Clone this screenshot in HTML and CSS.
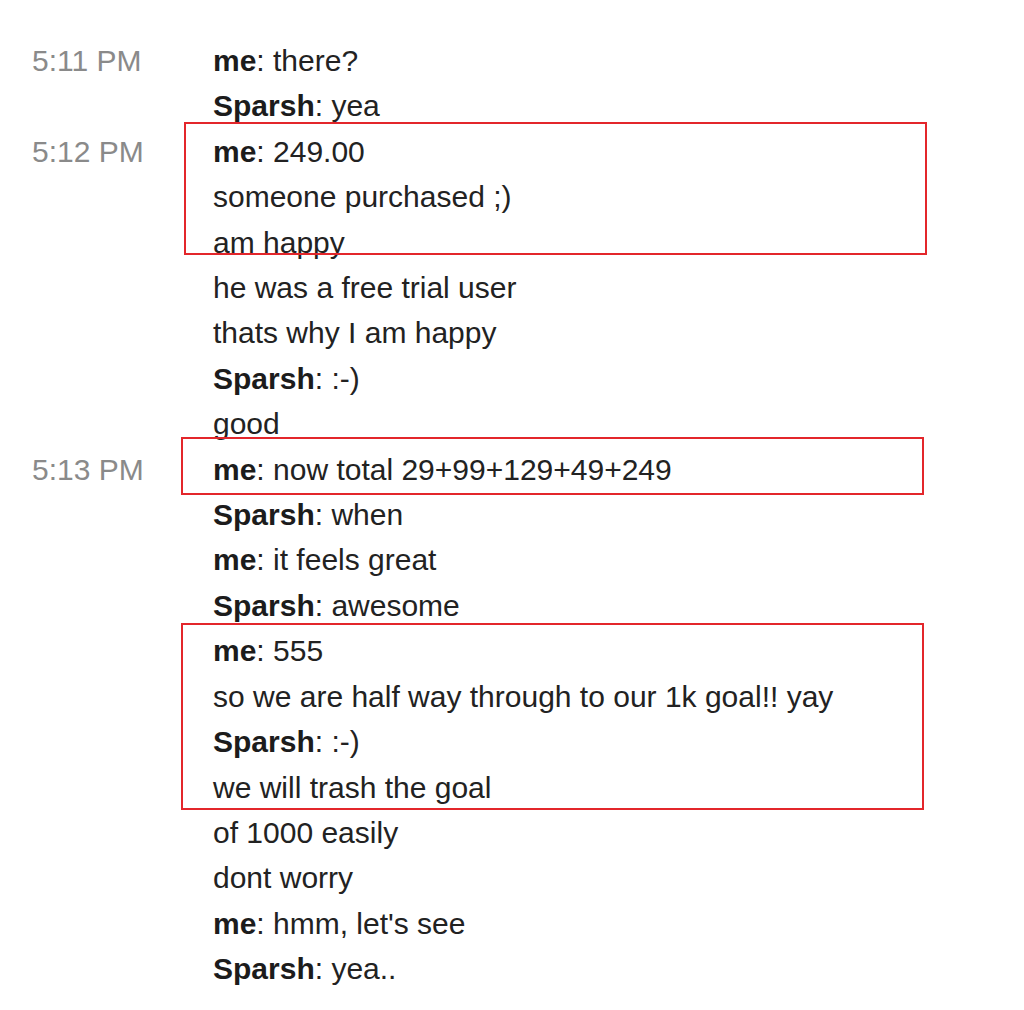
FILE: index.html
```html
<!DOCTYPE html>
<html>
<head>
<meta charset="utf-8">
<link rel="stylesheet" href="styles.css">
</head>
<body>
<div class="log">
  <div class="group">
    <div class="time">5:11 PM</div>
    <div class="msgs">
      <div class="line"><b>me</b>: there?</div>
      <div class="line"><b>Sparsh</b>: yea</div>
    </div>
  </div>
  <div class="group">
    <div class="time">5:12 PM</div>
    <div class="msgs">
      <div class="line"><b>me</b>: 249.00</div>
      <div class="line">someone purchased ;)</div>
      <div class="line">am happy</div>
      <div class="line">he was a free trial user</div>
      <div class="line">thats why I am happy</div>
      <div class="line"><b>Sparsh</b>: :-)</div>
      <div class="line">good</div>
    </div>
  </div>
  <div class="group">
    <div class="time">5:13 PM</div>
    <div class="msgs">
      <div class="line"><b>me</b>: now total 29+99+129+49+249</div>
      <div class="line"><b>Sparsh</b>: when</div>
      <div class="line"><b>me</b>: it feels great</div>
      <div class="line"><b>Sparsh</b>: awesome</div>
      <div class="line"><b>me</b>: 555</div>
      <div class="line">so we are half way through to our 1k goal!! yay</div>
      <div class="line"><b>Sparsh</b>: :-)</div>
      <div class="line">we will trash the goal</div>
      <div class="line">of 1000 easily</div>
      <div class="line">dont worry</div>
      <div class="line"><b>me</b>: hmm, let's see</div>
      <div class="line"><b>Sparsh</b>: yea..</div>
    </div>
  </div>
  <div class="mark mark-1"></div>
  <div class="mark mark-2"></div>
  <div class="mark mark-3"></div>
</div>
</body>
</html>
```

FILE: styles.css
```css
html, body {
  margin: 0;
  padding: 0;
  background: #ffffff;
}

body {
  width: 1024px;
  height: 1010px;
  overflow: hidden;
}

.log {
  position: relative;
  padding: 38px 0 0 32px;
  font-family: "Liberation Sans", Arial, sans-serif;
  font-size: 30px;
  line-height: 45.4px;
  color: #222222;
}

.group {
  display: grid;
  grid-template-columns: 181px 1fr;
}

.time {
  color: #8a8a8a;
  white-space: nowrap;
}

.line {
  white-space: nowrap;
}

.line b {
  font-weight: bold;
  color: #1c1c1c;
}

.mark {
  position: absolute;
  border: 2px solid #e3262b;
  box-sizing: border-box;
}

.mark-1 {
  left: 184px;
  top: 122px;
  width: 743px;
  height: 133px;
}

.mark-2 {
  left: 181px;
  top: 437px;
  width: 743px;
  height: 58px;
}

.mark-3 {
  left: 181px;
  top: 623px;
  width: 743px;
  height: 187px;
}
```
